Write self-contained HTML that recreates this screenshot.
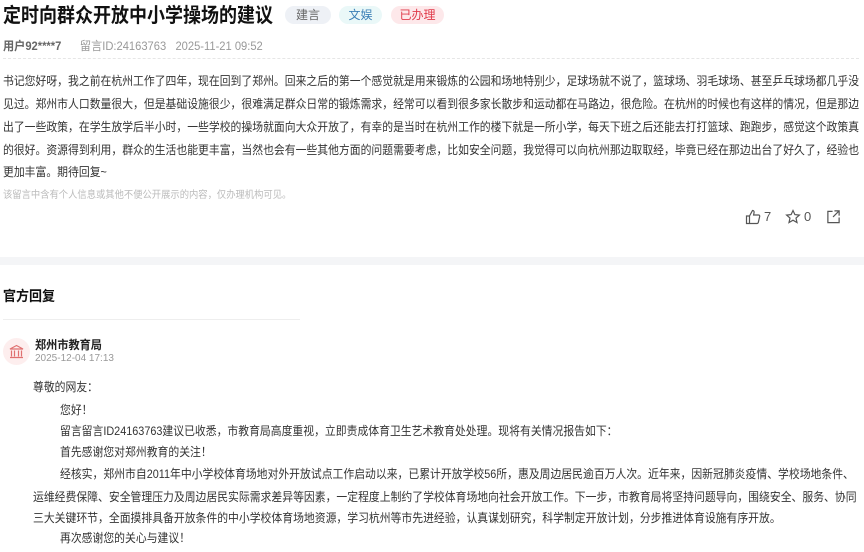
<!DOCTYPE html>
<html><head><meta charset="utf-8"><style>
body{margin:0;width:864px;height:552px;overflow:hidden;background:#fff;font-family:"Liberation Sans","Noto Sans CJK SC",sans-serif;color:#333;position:relative}
.a{position:absolute;white-space:nowrap}
.tag{position:absolute;top:6px;height:18px;line-height:18px;border-radius:9px;font-size:12px;text-align:center}
.l,.r{position:absolute;font-size:12px;color:#333;white-space:nowrap;transform:scaleX(0.903);transform-origin:0 0}
.l{left:3px}
</style></head><body>
<div class="a" style="left:3px;top:3px;font-size:20px;font-weight:bold;color:#111;line-height:26px;transform:scaleX(0.9);transform-origin:0 0">定时向群众开放中小学操场的建议</div>
<div class="tag" style="left:285px;width:46px;background:#eef1f6;color:#666">建言</div>
<div class="tag" style="left:339px;width:43px;background:#eaf8f8;color:#3b7fb6">文娱</div>
<div class="tag" style="left:391px;width:53px;background:#fde8ea;color:#e03a4a">已办理</div>
<div class="a" style="left:3px;top:37px;font-size:12px;color:#999;transform:scaleX(0.93);transform-origin:0 0"><b style="color:#666">用户92****7</b><span style="margin-left:20px">留言ID:24163763</span><span style="margin-left:10px">2025-11-21 09:52</span></div>
<div class="a" style="left:3px;top:58px;width:856px;border-top:1px dashed #e6e6e6"></div>
<div class="l" style="top:72px">书记您好呀，我之前在杭州工作了四年，现在回到了郑州。回来之后的第一个感觉就是用来锻炼的公园和场地特别少，足球场就不说了，篮球场、羽毛球场、甚至乒乓球场都几乎没</div>
<div class="l" style="top:95px">见过。郑州市人口数量很大，但是基础设施很少，很难满足群众日常的锻炼需求，经常可以看到很多家长散步和运动都在马路边，很危险。在杭州的时候也有这样的情况，但是那边</div>
<div class="l" style="top:118px">出了一些政策，在学生放学后半小时，一些学校的操场就面向大众开放了，有幸的是当时在杭州工作的楼下就是一所小学，每天下班之后还能去打打篮球、跑跑步，感觉这个政策真</div>
<div class="l" style="top:141px">的很好。资源得到利用，群众的生活也能更丰富，当然也会有一些其他方面的问题需要考虑，比如安全问题，我觉得可以向杭州那边取取经，毕竟已经在那边出台了好久了，经验也</div>
<div class="l" style="top:163px">更加丰富。期待回复~</div>
<div class="a" style="left:3px;top:186px;font-size:10px;color:#bbb;transform:scaleX(0.93);transform-origin:0 0">该留言中含有个人信息或其他不便公开展示的内容，仅办理机构可见。</div>
<svg class="a" style="left:745px;top:209px" width="16" height="16" viewBox="0 0 16 16" fill="none" stroke="#555" stroke-width="1.2"><path d="M1.5 7h3v7.5h-3z M4.5 7l3-5.5c1 0 1.8.7 1.6 1.8L8.6 6h5c.8 0 1.3.7 1.1 1.4l-1.4 6c-.2.6-.7 1.1-1.3 1.1H4.5"/></svg>
<div class="a" style="left:764px;top:209px;font-size:13px;color:#555">7</div>
<svg class="a" style="left:785px;top:209px" width="16" height="16" viewBox="0 0 16 16" fill="none" stroke="#555" stroke-width="1.2"><path d="M8 1.5l1.9 4.1 4.5.5-3.4 3 1 4.4L8 11.2 4 13.5l1-4.4-3.4-3 4.5-.5z"/></svg>
<div class="a" style="left:804px;top:209px;font-size:13px;color:#555">0</div>
<svg class="a" style="left:826px;top:209px" width="15" height="15" viewBox="0 0 16 16" fill="none" stroke="#555" stroke-width="1.3"><path d="M7 2.5H2v12h12V9 M9 2h5v5 M14 2L7.5 8.5"/></svg>
<div class="a" style="left:0;top:257px;width:864px;height:8px;background:#f4f5f7"></div>
<div class="a" style="left:3px;top:286px;font-size:14px;font-weight:bold;color:#111;transform:scaleX(0.93);transform-origin:0 0">官方回复</div>
<div class="a" style="left:3px;top:319px;width:297px;border-top:1px solid #eee"></div>
<div class="a" style="left:3px;top:338px;width:27px;height:27px;border-radius:50%;background:#fdeeee"></div>
<svg class="a" style="left:9px;top:344px" width="15" height="15" viewBox="0 0 15 15" fill="none" stroke="#e07070" stroke-width="1.2"><path d="M1 5L7.5 1.5 14 5z M2.5 6.5v6 M5.5 6.5v6 M9.5 6.5v6 M12.5 6.5v6 M1 13.5h13"/></svg>
<div class="a" style="left:35px;top:336px;font-size:12px;font-weight:bold;color:#222;transform:scaleX(0.93);transform-origin:0 0">郑州市教育局</div>
<div class="a" style="left:35px;top:353px;font-size:10px;color:#999">2025-12-04 17:13</div>
<div class="r" style="left:33px;top:378px">尊敬的网友：</div>
<div class="r" style="left:60px;top:401px">您好！</div>
<div class="r" style="left:60px;top:422px">留言留言ID24163763建议已收悉，市教育局高度重视，立即责成体育卫生艺术教育处处理。现将有关情况报告如下：</div>
<div class="r" style="left:60px;top:443px">首先感谢您对郑州教育的关注！</div>
<div class="r" style="left:60px;top:465px">经核实，郑州市自2011年中小学校体育场地对外开放试点工作启动以来，已累计开放学校56所，惠及周边居民逾百万人次。近年来，因新冠肺炎疫情、学校场地条件、</div>
<div class="r" style="left:33px;top:488px">运维经费保障、安全管理压力及周边居民实际需求差异等因素，一定程度上制约了学校体育场地向社会开放工作。下一步，市教育局将坚持问题导向，围绕安全、服务、协同</div>
<div class="r" style="left:33px;top:509px">三大关键环节，全面摸排具备开放条件的中小学校体育场地资源，学习杭州等市先进经验，认真谋划研究，科学制定开放计划，分步推进体育设施有序开放。</div>
<div class="r" style="left:60px;top:529px">再次感谢您的关心与建议！</div>
</body></html>
